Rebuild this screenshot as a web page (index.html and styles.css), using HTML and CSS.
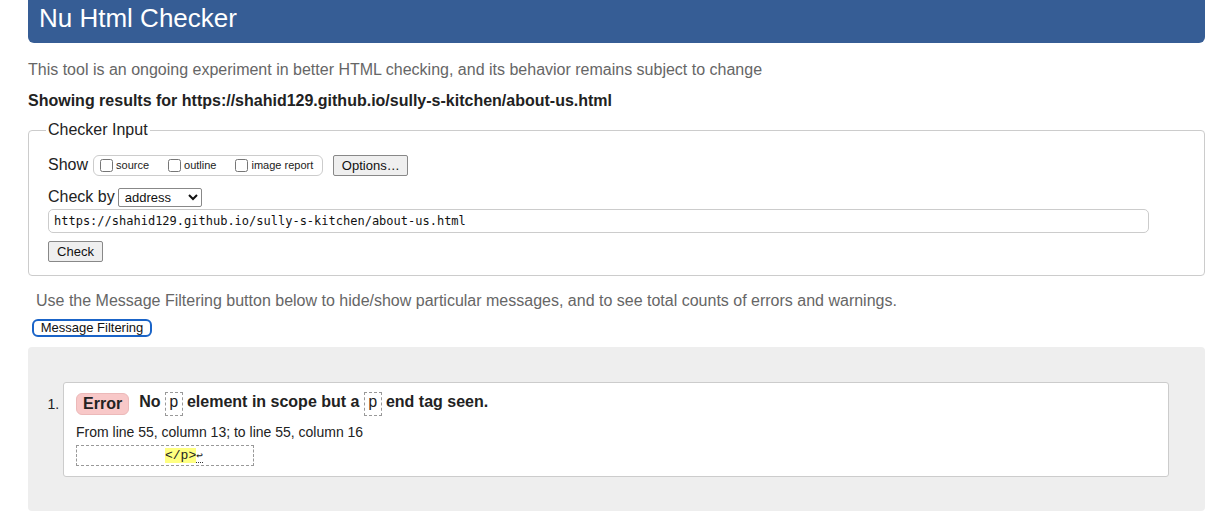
FILE: index.html
```html
<!DOCTYPE html>
<html lang="en">
<head>
<meta charset="utf-8">
<title>Nu Html Checker</title>
<link rel="stylesheet" href="styles.css">
</head>
<body>
<h1 class="title">Nu Html Checker</h1>
<p class="intro">This tool is an ongoing experiment in better HTML checking, and its behavior remains subject to change</p>
<p class="showing">Showing results for https://shahid129.github.io/sully-s-kitchen/about-us.html</p>
<form class="checker">
  <fieldset class="fs">
    <legend class="legend">Checker Input</legend>
    <div class="row show-row">
      <span class="label">Show</span>
      <span class="opts">
        <label class="opt"><input type="checkbox" class="cb">source</label>
        <label class="opt"><input type="checkbox" class="cb">outline</label>
        <label class="opt"><input type="checkbox" class="cb">image report</label>
      </span>
      <button type="button" class="btn options">Options…</button>
    </div>
    <div class="row by-row">
      <span class="label">Check by</span>
      <select class="sel"><option>address</option></select>
    </div>
    <input class="url" type="text" value="https://shahid129.github.io/sully-s-kitchen/about-us.html">
    <div class="row"><button type="button" class="btn check">Check</button></div>
  </fieldset>
</form>
<p class="filter-note">Use the Message Filtering button below to hide/show particular messages, and to see total counts of errors and warnings.</p>
<button type="button" class="btn filtering">Message Filtering</button>
<div class="results">
  <ol class="list">
    <li class="msg">
      <p class="msg-line"><span class="badge">Error</span><span class="msg-text">No <code class="tag">p</code> element in scope but a <code class="tag">p</code> end tag seen.</span></p>
      <p class="loc">From line 55, column 13; to line 55, column 16</p>
      <p class="extract"><code class="ex-code"><span class="hl">&lt;/p&gt;</span><span class="lf">↩</span></code></p>
    </li>
  </ol>
</div>
</body>
</html>
```
FILE: styles.css
```css
html, body {
  margin: 0;
  padding: 0;
  background: #fff;
}
body {
  font-family: "Liberation Sans", Arial, Helvetica, sans-serif;
  color: #222;
  padding: 0 14px 0 28px;
}
.title {
  margin: 0;
  height: 43px;
  background: #365d95;
  color: #fff;
  font-weight: normal;
  font-size: 26px;
  line-height: 36px;
  padding-left: 11px;
  border-radius: 0 0 6px 6px;
}
.intro {
  margin: 18px 0 0 0;
  font-size: 16px;
  line-height: 18px;
  color: #666;
}
.showing {
  margin: 13px 0 0 0;
  font-size: 16px;
  line-height: 18px;
  font-weight: bold;
  color: #222;
}
.checker {
  margin: 11px 0 0 0;
}
.fs {
  margin: 0;
  border: 1px solid #ccc;
  border-radius: 4px;
  padding: 15px 19px 13px 19px;
}
.legend {
  font-size: 16px;
  padding: 0 2px;
  margin-left: -2px;
  color: #222;
}
.row {
  display: flex;
  align-items: center;
}
.label {
  font-size: 16px;
  color: #222;
}
.show-row {
  height: 22px;
}
.opts {
  display: inline-flex;
  align-items: center;
  margin-left: 5px;
  border: 1px solid #ccc;
  border-radius: 6px;
  height: 19px;
  padding: 0 9px 0 6px;
  gap: 19px;
}
.opt {
  display: inline-flex;
  align-items: center;
  font-size: 11px;
  color: #222;
}
.cb {
  margin: 0 3px 0 0;
  width: 13px;
  height: 13px;
}
.btn {
  font-family: "Liberation Sans", Arial, sans-serif;
  font-size: 13px;
  background: #efefef;
  border: 1px solid #888;
  border-radius: 2px;
  color: #111;
  padding: 0 6px;
  height: 21px;
}
.options {
  margin-left: 10px;
  width: 75px;
}
.by-row {
  margin-top: 11px;
  height: 20px;
}
.sel {
  margin-left: 3px;
  font-family: "Liberation Sans", Arial, sans-serif;
  font-size: 13px;
  height: 19px;
  width: 84px;
  border: 1px solid #888;
  border-radius: 2px;
  background: #fff;
  color: #111;
  padding: 0 2px;
}
.url {
  display: block;
  box-sizing: border-box;
  margin-top: 2px;
  width: 1101px;
  height: 24px;
  border: 1px solid #ccc;
  border-radius: 5px;
  font-family: "DejaVu Sans Mono", monospace;
  font-size: 12px;
  padding: 0 5px;
  color: #111;
}
.check {
  margin-top: 8px;
  width: 55px;
}
.filter-note {
  margin: 16px 0 0 8px;
  font-size: 16px;
  line-height: 18px;
  color: #666;
}
.filtering {
  margin: 9px 0 0 4px;
  height: 18px;
  width: 120px;
  padding: 0;
  background: #fff;
  border: 2px solid #1a64c8;
  border-radius: 6px;
  font-size: 13px;
  line-height: 14px;
}
.results {
  margin-top: 10px;
  background: #eee;
  border-radius: 4px;
  padding: 35px 36px 34px 35px;
}
.list {
  margin: 0;
  padding: 0;
  list-style: decimal;
  font-size: 14px;
}
.msg {
  background: #fff;
  border: 1px solid #ccc;
  border-radius: 3px;
  padding: 10px 12px 9px 12px;
  height: 74px;
}
.msg-line {
  margin: 0;
  display: flex;
  align-items: center;
  height: 22px;
  font-size: 16px;
  font-weight: bold;
}
.badge {
  display: inline-block;
  background: #f8c8c8;
  border: 1px solid #ecb9b9;
  border-radius: 6px;
  padding: 0 6px;
  height: 20px;
  line-height: 20px;
  font-size: 16px;
  margin-right: 10px;
  color: #222;
}
.msg-text {
  white-space: pre;
}
.tag {
  display: inline-block;
  font-family: "Liberation Mono", "Courier New", monospace;
  font-weight: normal;
  font-size: 16px;
  border: 1px dashed #999;
  padding: 2px 3px 3px 3px;
  line-height: 17px;
}
.loc {
  margin: 9px 0 0 0;
  font-size: 14px;
  line-height: 16px;
}
.extract {
  margin: 5px 0 0 0;
  width: 176px;
  height: 19px;
  border: 1px dashed #999;
  box-sizing: content-box;
}
.ex-code {
  display: block;
  padding-left: 88px;
  font-family: "Liberation Mono", "Courier New", monospace;
  font-size: 13px;
  line-height: 19px;
}
.hl {
  background: #ffff80;
}
.lf {
  font-size: 11px;
  border-bottom: 1px dotted #333;
}
```
